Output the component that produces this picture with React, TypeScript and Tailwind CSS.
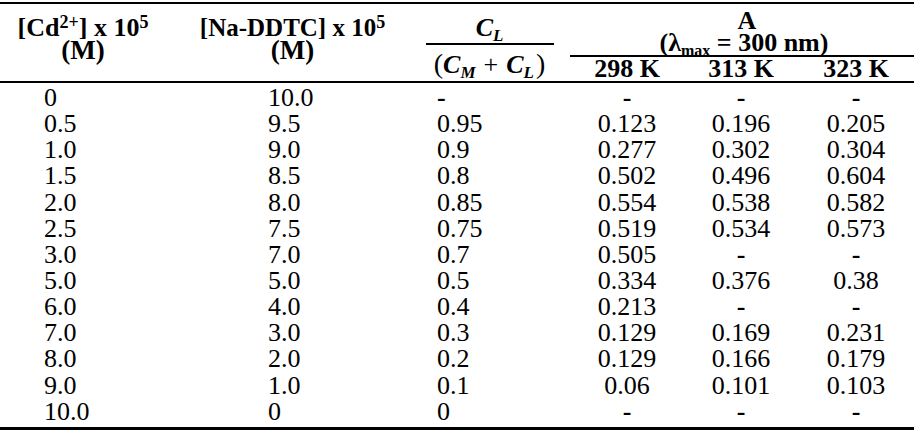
import React from "react";

const rows = [
  ["0", "10.0", "-", "-", "-", "-"],
  ["0.5", "9.5", "0.95", "0.123", "0.196", "0.205"],
  ["1.0", "9.0", "0.9", "0.277", "0.302", "0.304"],
  ["1.5", "8.5", "0.8", "0.502", "0.496", "0.604"],
  ["2.0", "8.0", "0.85", "0.554", "0.538", "0.582"],
  ["2.5", "7.5", "0.75", "0.519", "0.534", "0.573"],
  ["3.0", "7.0", "0.7", "0.505", "-", "-"],
  ["5.0", "5.0", "0.5", "0.334", "0.376", "0.38"],
  ["6.0", "4.0", "0.4", "0.213", "-", "-"],
  ["7.0", "3.0", "0.3", "0.129", "0.169", "0.231"],
  ["8.0", "2.0", "0.2", "0.129", "0.166", "0.179"],
  ["9.0", "1.0", "0.1", "0.06", "0.101", "0.103"],
  ["10.0", "0", "0", "-", "-", "-"],
];

const cols = "grid-cols-[190px_205px_175px_114px_114px_116px]";

function Sup({ children }: { children: React.ReactNode }) {
  return <span className="align-[0.42em] text-[18px] leading-[0]">{children}</span>;
}

function Sub({ children, size = "text-[15px]" }: { children: React.ReactNode; size?: string }) {
  return <span className={`align-[-0.3em] leading-[0] ${size}`}>{children}</span>;
}

function Cell({ v, className }: { v: string; className: string }) {
  return <div className={`${className} ${v === "-" ? "font-bold" : ""}`}>{v}</div>;
}

export default function App() {
  return (
    <div className="w-[914px] h-[433px] bg-white text-black font-['Liberation_Serif',serif] pt-[2px]">
      {/* header */}
      <div className={`grid ${cols} grid-rows-[53px_24px] border-t-2 border-b-2 border-black font-bold text-[26px]`}>
        <div className="row-span-2 pt-[13px] pr-[24px] text-center leading-[22px]">
          <div>
            [Cd<Sup>2+</Sup>] x 10<Sup>5</Sup>
          </div>
          <div className="text-[27px]">(M)</div>
        </div>
        <div className="row-span-2 pt-[13px] text-center leading-[22px]">
          <div className="text-[25px]">
            [Na-DDTC] x 10<Sup>5</Sup>
          </div>
          <div className="text-[27px]">(M)</div>
        </div>
        <div className="row-span-2 pl-[14px] flex flex-col items-center">
          <div className="h-[39px] pt-[13px] leading-[22px] italic">
            C<Sub size="text-[17px]">L</Sub>
          </div>
          <div className="w-[128px] border-t-2 border-black pt-[8px] text-center leading-[22px] whitespace-nowrap">
            <span className="font-normal text-[28px]">(</span>
            <span className="italic">C</span>
            <Sub size="text-[17px]">
              <span className="italic">M</span>
            </Sub>
            <span className="font-normal mx-[8px]">+</span>
            <span className="italic">C</span>
            <Sub size="text-[17px]">
              <span className="italic">L</span>
            </Sub>
            <span className="font-normal text-[28px] ml-[2px]">)</span>
          </div>
        </div>
        <div className="col-span-3 border-b-2 border-black text-center pt-[6px]">
          <div className="h-[22px] leading-[22px] pl-[10px]">A</div>
          <div className="h-[22px] leading-[22px] pl-[4px]">
            (λ<Sub size="text-[16px]">max</Sub> = 300 nm)
          </div>
        </div>
        <div className="text-center leading-[24px]">298 K</div>
        <div className="text-center leading-[24px]">313 K</div>
        <div className="text-center leading-[24px]">323 K</div>
      </div>

      {/* body */}
      <div className={`grid ${cols} auto-rows-[26.15px] pt-[2px] pb-[2px] border-b-[3px] border-black text-[26px] leading-[26.15px]`}>
        {rows.map((r, i) => (
          <React.Fragment key={i}>
            <Cell v={r[0]} className="pl-[44px]" />
            <Cell v={r[1]} className="pl-[78px]" />
            <Cell v={r[2]} className="pl-[42px]" />
            <Cell v={r[3]} className="text-center" />
            <Cell v={r[4]} className="text-center" />
            <Cell v={r[5]} className="text-center" />
          </React.Fragment>
        ))}
      </div>
    </div>
  );
}
